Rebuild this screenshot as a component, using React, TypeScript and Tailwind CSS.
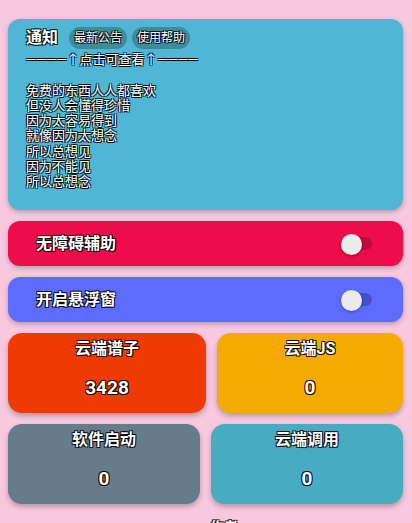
import React from "react";

const outline =
  "[text-shadow:-1px_-1px_0_rgba(0,0,0,0.85),1px_-1px_0_rgba(0,0,0,0.85),-1px_1px_0_rgba(0,0,0,0.85),1px_1px_0_rgba(0,0,0,0.85)]";

const Toggle = ({ track }: { track: string }) => (
  <div className="relative w-[33px] h-[20px] flex items-center">
    <div className={`ml-[9px] w-[23px] h-[13px] rounded-full ${track}`} />
    <div className="absolute left-[1px] top-0 w-[21px] h-[21px] rounded-full bg-[#ececec] shadow-[0_1px_3px_rgba(0,0,0,0.35)]" />
  </div>
);

const Stat = ({ title, value, color, extra }: { title: string; value: string; color: string; extra: string }) => (
  <div className={`${extra} ${color} h-[80px] rounded-[14px] shadow-[0_3px_5px_rgba(0,0,0,0.25)] flex flex-col items-center pt-[5px]`}>
    <div className={`text-[16px] font-bold leading-[22px] text-white ${outline}`}>{title}</div>
    <div className={`mt-[16px] text-[19px] font-bold leading-[24px] text-white ${outline}`}>{value}</div>
  </div>
);

const poem = [
  "————↑点击可查看↑————",
  "\u00a0",
  "免费的东西人人都喜欢",
  "但没人会懂得珍惜",
  "因为太容易得到",
  "就像因为太想念",
  "所以总想见",
  "因为不能见",
  "所以总想念",
];

export default function App() {
  return (
    <div className="min-h-screen bg-[#f8c8de] px-2 pt-[19px] font-['Roboto','Noto_Sans_CJK_SC',sans-serif] overflow-hidden">
      <div className="flex flex-col gap-[11px] mr-px">
        <div className="bg-[#4fb6d6] rounded-[12px] shadow-[0_2px_5px_rgba(0,0,0,0.25)] pl-[18px] pt-[8px] h-[191px]">
          <div className="flex items-center gap-[5px] h-[22px]">
            <span className={`text-[16px] font-bold text-white mr-[6px] ${outline}`}>通知</span>
            <span className={`h-[22px] px-[5px] rounded-full bg-[#3d8d98] text-[12px] leading-[22px] text-white ${outline}`}>最新公告</span>
            <span className={`h-[22px] px-[5px] rounded-full bg-[#3d8d98] text-[12px] leading-[22px] text-white ${outline}`}>使用帮助</span>
          </div>
          <div className={`mt-[3px] text-[13px] leading-[15.3px] text-white ${outline}`}>
            {poem.map((l, i) => (
              <div key={i}>{l}</div>
            ))}
          </div>
        </div>

        <div className="bg-[#ee0c4a] rounded-[12px] shadow-[0_2px_5px_rgba(0,0,0,0.25)] h-[45px] flex items-center justify-between pl-[28px] pr-[30px]">
          <span className={`text-[16px] font-bold text-white ${outline}`}>无障碍辅助</span>
          <Toggle track="bg-[#c10a3b]" />
        </div>
        <div className="bg-[#5e6bff] rounded-[12px] shadow-[0_2px_5px_rgba(0,0,0,0.25)] h-[45px] flex items-center justify-between pl-[28px] pr-[30px]">
          <span className={`text-[16px] font-bold text-white ${outline}`}>开启悬浮窗</span>
          <Toggle track="bg-[#4550c8]" />
        </div>

        <div className="flex gap-[11px]">
          <Stat title="云端谱子" value="3428" color="bg-[#f03a04]" extra="w-[198px]" />
          <Stat title="云端JS" value="0" color="bg-[#f4ab00]" extra="flex-1" />
        </div>
        <div className="flex gap-[11px]">
          <Stat title="软件启动" value="0" color="bg-[#667c8a]" extra="flex-1" />
          <Stat title="云端调用" value="0" color="bg-[#47abc1]" extra="flex-1" />
        </div>

        <div className={`pl-[202px] pt-[2px] text-[14px] font-bold text-white ${outline}`}>作者</div>
      </div>
    </div>
  );
}
